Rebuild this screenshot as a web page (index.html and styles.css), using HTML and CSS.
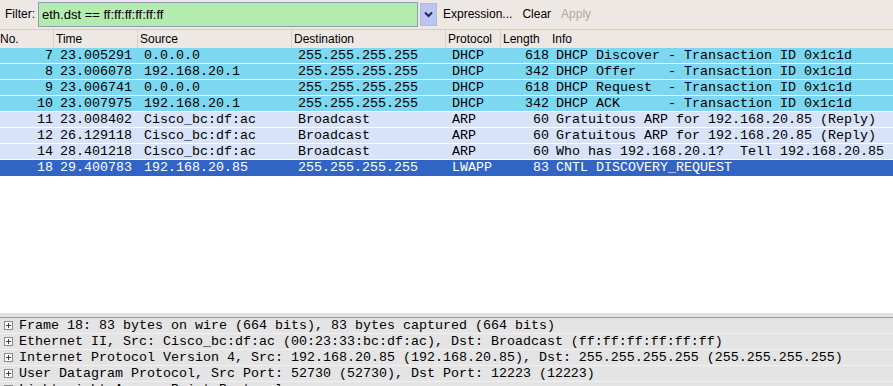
FILE: index.html
```html
<!DOCTYPE html>
<html lang="en">

<head>
    <meta charset="UTF-8">
    <meta name="viewport" content="width=device-width, initial-scale=1.0">
    <title>Wireshark - eth.dst filter</title>
    <link rel="stylesheet" href="styles.css">
</head>

<body>
    <div class="window">
        <!-- filter toolbar -->
        <div class="filter-bar">
            <span class="filter-label">Filter:</span>
            <div class="filter-input">eth.dst == ff:ff:ff:ff:ff:ff</div>
            <div class="filter-drop">
                <svg width="9" height="7" viewBox="0 0 9 7">
                    <path d="M1 1.5 L4.5 5 L8 1.5" fill="none" stroke="#1c2a5c" stroke-width="2"/>
                </svg>
            </div>
            <span class="tool-link">Expression...</span>
            <span class="tool-link">Clear</span>
            <span class="tool-link disabled">Apply</span>
        </div>

        <!-- packet list -->
        <div class="packet-list">
            <div class="list-head">
                <span class="col c-no">No.</span>
                <span class="col c-time">Time</span>
                <span class="col c-src">Source</span>
                <span class="col c-dst">Destination</span>
                <span class="col c-proto">Protocol</span>
                <span class="col c-len">Length</span>
                <span class="col c-info">Info</span>
            </div>
            <div class="row dhcp">
                <span class="col c-no">7</span><span class="col c-time">23.005291</span><span class="col c-src">0.0.0.0</span><span class="col c-dst">255.255.255.255</span><span class="col c-proto">DHCP</span><span class="col c-len">618</span><span class="col c-info">DHCP Discover - Transaction ID 0x1c1d</span>
            </div>
            <div class="row dhcp">
                <span class="col c-no">8</span><span class="col c-time">23.006078</span><span class="col c-src">192.168.20.1</span><span class="col c-dst">255.255.255.255</span><span class="col c-proto">DHCP</span><span class="col c-len">342</span><span class="col c-info">DHCP Offer    - Transaction ID 0x1c1d</span>
            </div>
            <div class="row dhcp">
                <span class="col c-no">9</span><span class="col c-time">23.006741</span><span class="col c-src">0.0.0.0</span><span class="col c-dst">255.255.255.255</span><span class="col c-proto">DHCP</span><span class="col c-len">618</span><span class="col c-info">DHCP Request  - Transaction ID 0x1c1d</span>
            </div>
            <div class="row dhcp">
                <span class="col c-no">10</span><span class="col c-time">23.007975</span><span class="col c-src">192.168.20.1</span><span class="col c-dst">255.255.255.255</span><span class="col c-proto">DHCP</span><span class="col c-len">342</span><span class="col c-info">DHCP ACK      - Transaction ID 0x1c1d</span>
            </div>
            <div class="row arp">
                <span class="col c-no">11</span><span class="col c-time">23.008402</span><span class="col c-src">Cisco_bc:df:ac</span><span class="col c-dst">Broadcast</span><span class="col c-proto">ARP</span><span class="col c-len">60</span><span class="col c-info">Gratuitous ARP for 192.168.20.85 (Reply)</span>
            </div>
            <div class="row arp">
                <span class="col c-no">12</span><span class="col c-time">26.129118</span><span class="col c-src">Cisco_bc:df:ac</span><span class="col c-dst">Broadcast</span><span class="col c-proto">ARP</span><span class="col c-len">60</span><span class="col c-info">Gratuitous ARP for 192.168.20.85 (Reply)</span>
            </div>
            <div class="row arp">
                <span class="col c-no">14</span><span class="col c-time">28.401218</span><span class="col c-src">Cisco_bc:df:ac</span><span class="col c-dst">Broadcast</span><span class="col c-proto">ARP</span><span class="col c-len">60</span><span class="col c-info">Who has 192.168.20.1?  Tell 192.168.20.85</span>
            </div>
            <div class="row selected">
                <span class="col c-no">18</span><span class="col c-time">29.400783</span><span class="col c-src">192.168.20.85</span><span class="col c-dst">255.255.255.255</span><span class="col c-proto">LWAPP</span><span class="col c-len">83</span><span class="col c-info">CNTL DISCOVERY_REQUEST</span>
            </div>
        </div>

        <!-- packet details -->
        <div class="splitter"></div>
        <div class="details">
            <div class="tree-row"><span class="expander"></span>Frame 18: 83 bytes on wire (664 bits), 83 bytes captured (664 bits)</div>
            <div class="tree-row"><span class="expander"></span>Ethernet II, Src: Cisco_bc:df:ac (00:23:33:bc:df:ac), Dst: Broadcast (ff:ff:ff:ff:ff:ff)</div>
            <div class="tree-row"><span class="expander"></span>Internet Protocol Version 4, Src: 192.168.20.85 (192.168.20.85), Dst: 255.255.255.255 (255.255.255.255)</div>
            <div class="tree-row"><span class="expander"></span>User Datagram Protocol, Src Port: 52730 (52730), Dst Port: 12223 (12223)</div>
            <div class="tree-row"><span class="expander"></span>Lightweight Access Point Protocol</div>
        </div>
    </div>
</body>

</html>
```

FILE: styles.css
```css
body {
    margin: 0;
    padding: 0;
    background-color: #fff;
    font-family: "Liberation Sans", Arial, sans-serif;
    font-size: 12px;
    color: #000;
    overflow: hidden;
}

.window {
    width: 893px;
    height: 386px;
    display: flex;
    flex-direction: column;
    overflow: hidden;
}

/* filter toolbar */
.filter-bar {
    height: 30px;
    flex: none;
    display: flex;
    align-items: center;
    background-color: #ede8e3;
    border-bottom: 1px solid #d6d0b4;
    box-sizing: border-box;
    padding-bottom: 1px;
}

.filter-label {
    margin-left: 5px;
    width: 33px;
}

.filter-input {
    width: 380px;
    height: 25px;
    box-sizing: border-box;
    border: 1px solid #8aa0b8;
    background-color: #b4ecb0;
    padding-left: 3px;
    line-height: 23px;
    font-size: 13px;
}

.filter-drop {
    width: 17px;
    height: 23px;
    margin-left: 2px;
    box-sizing: border-box;
    border: 1px solid #b0b8e8;
    background-color: #bcc4f2;
    display: flex;
    align-items: center;
    justify-content: center;
}

.tool-link {
    margin-left: 6px;
    margin-right: 4px;
}

.tool-link.disabled {
    color: #b0aca0;
}

/* packet list */
.packet-list {
    flex: 1;
    font-family: "Liberation Mono", "Courier New", monospace;
    font-size: 13.33px;
}

.list-head {
    height: 18px;
    display: flex;
    background-color: #ede8e3;
    font-family: "Liberation Sans", Arial, sans-serif;
    font-size: 12px;
    line-height: 18px;
}

.list-head .col {
    padding-left: 2px;
    text-align: left;
    border-right: 1px solid #d8d2c0;
}

.list-head .c-no {
    margin-left: -2px;
    width: 56px;
}

.row {
    height: 16px;
    display: flex;
    line-height: 15px;
    border-bottom: 1px solid #fff;
    box-sizing: border-box;
}

.col {
    box-sizing: border-box;
    white-space: pre;
    overflow: hidden;
    padding-left: 4px;
    flex: none;
}

.c-no {
    width: 56px;
    text-align: right;
    padding-left: 0;
    padding-right: 3px;
}

.c-time {
    width: 84px;
}

.c-src {
    width: 154px;
}

.c-dst {
    width: 154px;
}

.c-proto {
    width: 55px;
}

.c-len {
    width: 49px;
    text-align: right;
    padding-left: 0;
    padding-right: 3px;
}

.c-info {
    flex: 1;
}

.list-head .c-len,
.list-head .c-info {
    border-right: none;
}

.dhcp {
    background-color: #7cd8f0;
}

.arp {
    background-color: #d8e2f8;
}

.selected {
    background-color: #3264c6;
    color: #fff;
    border-bottom: none;
}

/* packet details */
.splitter {
    height: 4px;
    flex: none;
    background-color: #e4e2de;
    border-bottom: 1px solid #8aa0b8;
}

.details {
    height: 68px;
    flex: none;
    background-color: #e4e4e4;
    font-family: "Liberation Mono", "Courier New", monospace;
    font-size: 13.33px;
}

.tree-row {
    height: 16px;
    line-height: 15px;
    display: flex;
    align-items: center;
    white-space: pre;
    border-bottom: 1px solid #f0f0f0;
    box-sizing: border-box;
}

.expander {
    width: 9px;
    height: 9px;
    margin: 0 6px 0 4px;
    box-sizing: border-box;
    border: 1px solid #8c8c8c;
    background: linear-gradient(#404040, #404040) center / 5px 1px no-repeat,
                linear-gradient(#404040, #404040) center / 1px 5px no-repeat,
                #fafafa;
    flex: none;
}
```
